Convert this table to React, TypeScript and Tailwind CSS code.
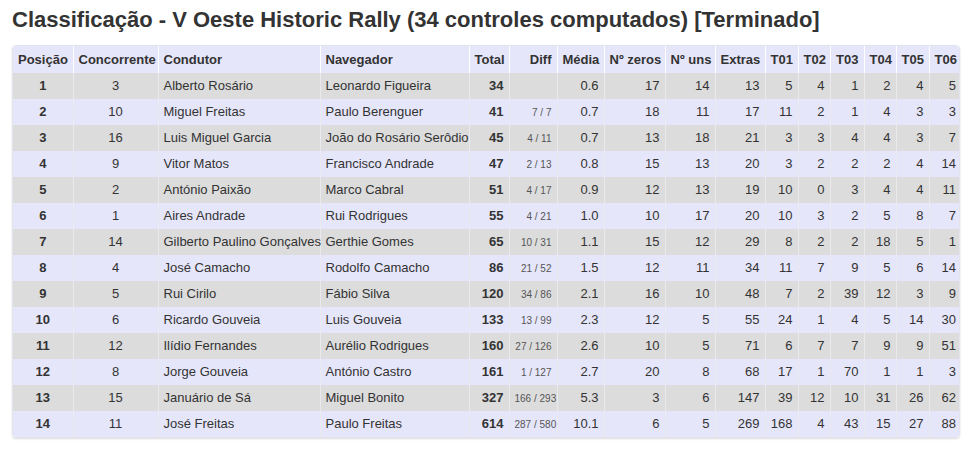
import React from 'react';

type Row = [number, number, string, string, number, string, string, number, number, number, number, number, number, number, number, number];

const rows: Row[] = [
  [1, 3, 'Alberto Rosário', 'Leonardo Figueira', 34, '', '0.6', 17, 14, 13, 5, 4, 1, 2, 4, 5],
  [2, 10, 'Miguel Freitas', 'Paulo Berenguer', 41, '7 / 7', '0.7', 18, 11, 17, 11, 2, 1, 4, 3, 3],
  [3, 16, 'Luis Miguel Garcia', 'João do Rosário Serôdio', 45, '4 / 11', '0.7', 13, 18, 21, 3, 3, 4, 4, 3, 7],
  [4, 9, 'Vitor Matos', 'Francisco Andrade', 47, '2 / 13', '0.8', 15, 13, 20, 3, 2, 2, 2, 4, 14],
  [5, 2, 'António Paixão', 'Marco Cabral', 51, '4 / 17', '0.9', 12, 13, 19, 10, 0, 3, 4, 4, 11],
  [6, 1, 'Aires Andrade', 'Rui Rodrigues', 55, '4 / 21', '1.0', 10, 17, 20, 10, 3, 2, 5, 8, 7],
  [7, 14, 'Gilberto Paulino Gonçalves', 'Gerthie Gomes', 65, '10 / 31', '1.1', 15, 12, 29, 8, 2, 2, 18, 5, 1],
  [8, 4, 'José Camacho', 'Rodolfo Camacho', 86, '21 / 52', '1.5', 12, 11, 34, 11, 7, 9, 5, 6, 14],
  [9, 5, 'Rui Cirilo', 'Fábio Silva', 120, '34 / 86', '2.1', 16, 10, 48, 7, 2, 39, 12, 3, 9],
  [10, 6, 'Ricardo Gouveia', 'Luis Gouveia', 133, '13 / 99', '2.3', 12, 5, 55, 24, 1, 4, 5, 14, 30],
  [11, 12, 'Ilídio Fernandes', 'Aurélio Rodrigues', 160, '27 / 126', '2.6', 10, 5, 71, 6, 7, 7, 9, 9, 51],
  [12, 8, 'Jorge Gouveia', 'António Castro', 161, '1 / 127', '2.7', 20, 8, 68, 17, 1, 70, 1, 1, 3],
  [13, 15, 'Januário de Sá', 'Miguel Bonito', 327, '166 / 293', '5.3', 3, 6, 147, 39, 12, 10, 31, 26, 62],
  [14, 11, 'José Freitas', 'Paulo Freitas', 614, '287 / 580', '10.1', 6, 5, 269, 168, 4, 43, 15, 27, 88],
];

// widths measured off the screenshot, they add up to 948
const cols = [
  { label: 'Posição', w: 'w-[60px]', align: 'text-center', head: 'text-center' },
  { label: 'Concorrente', w: 'w-[85px]', align: 'text-center', head: 'text-center' },
  { label: 'Condutor', w: 'w-[162px]', align: 'text-left', head: 'text-left' },
  { label: 'Navegador', w: 'w-[149px]', align: 'text-left', head: 'text-left' },
  { label: 'Total', w: 'w-[40px]', align: 'text-right', head: 'text-left' },
  { label: 'Diff', w: 'w-[48px]', align: 'text-right', head: 'text-right' },
  { label: 'Média', w: 'w-[47px]', align: 'text-right', head: 'text-right' },
  { label: 'Nº zeros', w: 'w-[61px]', align: 'text-right', head: 'text-right' },
  { label: 'Nº uns', w: 'w-[50px]', align: 'text-right', head: 'text-right' },
  { label: 'Extras', w: 'w-[50px]', align: 'text-right', head: 'text-right' },
  { label: 'T01', w: 'w-[33px]', align: 'text-right', head: 'text-right' },
  { label: 'T02', w: 'w-[32px]', align: 'text-right', head: 'text-right' },
  { label: 'T03', w: 'w-[34px]', align: 'text-right', head: 'text-right' },
  { label: 'T04', w: 'w-[32px]', align: 'text-right', head: 'text-right' },
  { label: 'T05', w: 'w-[33px]', align: 'text-right', head: 'text-right' },
  { label: 'T06', w: 'w-[32px]', align: 'text-right', head: 'text-right' },
];

export default function App() {
  return (
    <div className="w-[971px] h-[449px] bg-white px-[12px] pt-[6px] text-[#333] font-['Liberation_Sans',Arial,sans-serif]">
      <h1 className="text-[22px] font-bold leading-[28px] mb-[11px]">
        Classificação - V Oeste Historic Rally (34 controles computados) [Terminado]
      </h1>

      <div className="w-[948px] rounded-[4px] overflow-hidden shadow-[0_1px_2px_rgba(0,0,0,0.15)] border border-[#e4e4ee]">
        <table className="w-full table-fixed border-collapse text-[13px]">
          <colgroup>
            {cols.map((c) => (
              <col key={c.label} className={c.w} />
            ))}
          </colgroup>
          <thead>
            <tr className="bg-[#e6e6fa] h-[27px]">
              {cols.map((c, i) => (
                <th
                  key={c.label}
                  className={`font-bold px-[5px] whitespace-nowrap ${c.head} ${i === 0 ? '' : 'border-l border-white'}`}
                >
                  {c.label}
                </th>
              ))}
            </tr>
          </thead>
          <tbody>
            {rows.map((r, ri) => (
              <tr key={ri} className={`h-[26px] ${ri % 2 === 0 ? 'bg-[#dcdcdc]' : 'bg-[#e6e6fa]'}`}>
                {r.map((v, ci) => (
                  <td
                    key={ci}
                    className={`px-[5px] whitespace-nowrap ${cols[ci].align} ${ci === 0 ? '' : 'border-l border-[#e9e9ee]'} ${
                      ci === 0 || ci === 4 ? 'font-bold' : ''
                    } ${ci === 5 ? 'text-[10px] text-[#555]' : ''}`}
                  >
                    {v}
                  </td>
                ))}
              </tr>
            ))}
          </tbody>
        </table>
      </div>
    </div>
  );
}
